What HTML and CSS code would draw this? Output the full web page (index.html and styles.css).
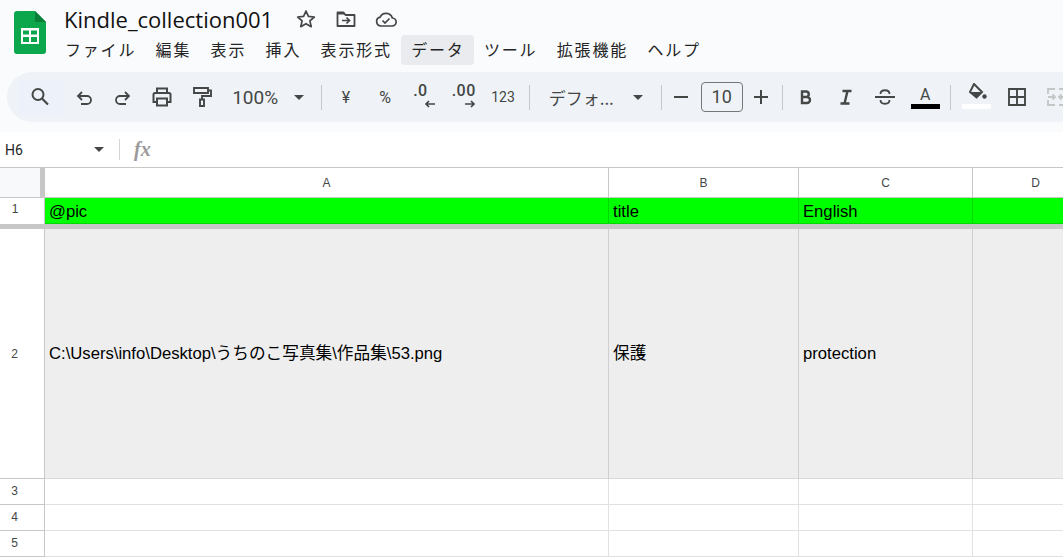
FILE: index.html
```html
<!DOCTYPE html>
<html lang="ja">
<head>
<meta charset="utf-8">
<title>Kindle_collection001</title>
<link rel="stylesheet" href="styles.css">
</head>
<body>
<header class="appbar">
  <svg class="logo" viewBox="0 0 32 43" width="32" height="43"><path d="M3 0H21L32 11V40a3 3 0 0 1-3 3H3a3 3 0 0 1-3-3V3a3 3 0 0 1 3-3z" fill="#0ca74c"/><path d="M21 0L32 11H21z" fill="#0a7f3a"/><path d="M7 17H25V33H7z" fill="#fff"/><path d="M9 19.500H15V23.500H9zM17 19.500H23V23.500H17zM9 26H15V31H9zM17 26H23V31H17z" fill="#0ca74c"/></svg>
  <div class="appbar-main">
    <div class="title-row">
      <span class="doc-title">Kindle_collection001</span>
      <svg class="title-icon" viewBox="0 0 24 24" width="24" height="24"><path d="M12 4l2.400 5.400 5.900.6-4.400 3.900 1.300 5.800L12 16.700l-5.200 3 1.300-5.800L3.700 10l5.900-.6z" fill="none" stroke="#444746" stroke-width="1.700" stroke-linejoin="round"/></svg>
      <svg class="title-icon" viewBox="0 0 24 24" width="24" height="24"><path d="M3.500 5.500h6l2 2.500h9v11h-17z" fill="none" stroke="#444746" stroke-width="1.800" stroke-linejoin="round"/><path d="M3 5h6.500l2 2.500H3z" fill="#444746"/><path d="M8 13.500h7M12.500 10.500l3 3-3 3" fill="none" stroke="#444746" stroke-width="1.700"/></svg>
      <svg class="title-icon" viewBox="0 0 24 24" width="24" height="24"><path d="M7 19a4.500 4.500 0 0 1-.8-8.900A6.500 6.500 0 0 1 18.300 11a4 4 0 0 1-.3 8z" fill="none" stroke="#444746" stroke-width="1.700"/><path d="M8.500 13.500l2.500 2.500 4.500-4.500" fill="none" stroke="#444746" stroke-width="1.700"/></svg>
    </div>
    <nav class="menu">
      <span class="menu-item">ファイル</span>
      <span class="menu-item">編集</span>
      <span class="menu-item">表示</span>
      <span class="menu-item">挿入</span>
      <span class="menu-item">表示形式</span>
      <span class="menu-item active">データ</span>
      <span class="menu-item">ツール</span>
      <span class="menu-item">拡張機能</span>
      <span class="menu-item">ヘルプ</span>
    </nav>
  </div>
</header>

<div class="toolbar-wrap">
  <div class="toolbar">
    <span class="tool search"><svg viewBox="0 0 24 24" width="24" height="24"><circle cx="10" cy="9.500" r="5.500" fill="none" stroke="#444746" stroke-width="2"/><path d="M14 13.500l6 6" stroke="#444746" stroke-width="2.200"/></svg></span>
    <span class="tool"><svg viewBox="0 0 24 24" width="24" height="24"><path d="M10 7l-4 4 4 4M6 11h9a4 4 0 0 1 0 8H9" fill="none" stroke="#444746" stroke-width="1.800"/></svg></span>
    <span class="tool"><svg viewBox="0 0 24 24" width="24" height="24"><path d="M14 7l4 4-4 4M18 11H9a4 4 0 0 0 0 8h6" fill="none" stroke="#444746" stroke-width="1.800"/></svg></span>
    <span class="tool"><svg viewBox="0 0 24 24" width="24" height="24"><path d="M7 8V3.500h10V8M7 17H3.500V9.500a1.500 1.500 0 0 1 1.500-1.500h14a1.500 1.500 0 0 1 1.500 1.500V17H17M7 13.500h10v7H7z" fill="none" stroke="#444746" stroke-width="2"/></svg></span>
    <span class="tool"><svg viewBox="0 0 24 24" width="24" height="24"><path d="M4 3h14v5H4zM18 5.500h3V11H12v3.500M10 14.500h4V21h-4z" fill="none" stroke="#444746" stroke-width="1.900"/></svg></span>
    <span class="tool zoom-box"><span class="tool-text zoom-text">100%</span><span class="caret"></span></span>
    <span class="sep"></span>
    <span class="tool tool-glyph">¥</span>
    <span class="tool tool-glyph">%</span>
    <span class="tool deci"><span class="deci-text deci-one">.0</span><svg class="deci-arrow" viewBox="0 0 12 8" width="12" height="8"><path d="M11 4H2M5 1L2 4l3 3" fill="none" stroke="#444746" stroke-width="1.700"/></svg></span>
    <span class="tool deci"><span class="deci-text">.00</span><svg class="deci-arrow" viewBox="0 0 12 8" width="12" height="8"><path d="M1 4h9M7 1l3 3-3 3" fill="none" stroke="#444746" stroke-width="1.700"/></svg></span>
    <span class="tool num">123</span>
    <span class="sep sep-num"></span>
    <span class="font-box"><span class="font-name">デフォ...</span><span class="caret"></span></span>
    <span class="sep"></span>
    <span class="tool step-minus"><svg viewBox="0 0 16 16" width="16" height="16"><path d="M1 8h14" stroke="#444746" stroke-width="2"/></svg></span>
    <span class="size-box">10</span>
    <span class="tool step-plus"><svg viewBox="0 0 16 16" width="16" height="16"><path d="M1 8h14M8 1v14" stroke="#444746" stroke-width="2"/></svg></span>
    <span class="sep sep-plus"></span>
    <span class="tool"><svg viewBox="0 0 24 24" width="24" height="24"><path d="M8 6.500h4.500a2.800 2.800 0 0 1 0 5.500H8zM8 12h5a3 3 0 0 1 0 6H8z" fill="none" stroke="#444746" stroke-width="2.400"/></svg></span>
    <span class="tool"><svg viewBox="0 0 24 24" width="24" height="24"><path d="M8.500 6h9M6.500 18.500h9M13.500 6l-3 12.500" fill="none" stroke="#444746" stroke-width="2.400"/></svg></span>
    <span class="tool"><svg viewBox="0 0 24 24" width="24" height="24"><path d="M2 12h20" stroke="#444746" stroke-width="1.800"/><path d="M7.500 9c0-5 9-5 9 0M7.500 15c0 5 9 5 9 0" fill="none" stroke="#444746" stroke-width="1.800"/></svg></span>
    <span class="tool swatch-tool text-color"><span class="text-a">A</span><span class="swatch black"></span></span>
    <span class="sep sep-a"></span>
    <span class="tool swatch-tool fill-tool"><svg viewBox="0 0 24 20" width="24" height="20"><path d="M9 1l8 8-5.500 5.500L5 9z" fill="none" stroke="#444746" stroke-width="2"/><path d="M5.500 9h11l-5 5.500z" fill="#444746"/><circle cx="19.500" cy="13.500" r="2.200" fill="#444746"/></svg><span class="swatch white"></span></span>
    <span class="tool border-tool"><svg viewBox="0 0 24 24" width="24" height="24"><path d="M4 4h16v16H4zM12 4v16M4 12h16" fill="none" stroke="#444746" stroke-width="1.900"/></svg></span>
    <span class="tool merge-tool"><svg viewBox="0 0 24 24" width="24" height="24"><path d="M10 4H3v5M3 15v5h7M14 4h7v5M21 15v5h-7M3 12h7M7.500 9.500L10 12l-2.500 2.500M21 12h-7M16.500 9.500L14 12l2.500 2.500" fill="none" stroke="#c4c7c5" stroke-width="1.800"/></svg></span>
  </div>
</div>

<div class="formula-bar">
  <span class="name-box">H6</span>
  <span class="caret name-caret"></span>
  <span class="formula-sep"></span>
  <span class="fx">fx</span>
</div>

<main class="sheet">
  <div class="corner"></div>
  <div class="col-head">A</div>
  <div class="col-head">B</div>
  <div class="col-head">C</div>
  <div class="col-head col-last">D</div>

  <div class="row-head frozen">1</div>
  <div class="cell head-cell">@pic</div>
  <div class="cell head-cell">title</div>
  <div class="cell head-cell">English</div>
  <div class="cell head-cell col-last"></div>

  <div class="row-head tall">2</div>
  <div class="cell gray-cell">C:\Users\info\Desktop\うちのこ写真集\作品集\53.png</div>
  <div class="cell gray-cell">保護</div>
  <div class="cell gray-cell">protection</div>
  <div class="cell gray-cell col-last"></div>

  <div class="row-head">3</div>
  <div class="cell"></div><div class="cell"></div><div class="cell"></div><div class="cell col-last"></div>
  <div class="row-head">4</div>
  <div class="cell"></div><div class="cell"></div><div class="cell"></div><div class="cell col-last"></div>
  <div class="row-head">5</div>
  <div class="cell"></div><div class="cell"></div><div class="cell"></div><div class="cell col-last"></div>
</main>
</body>
</html>
```
FILE: styles.css
```css
* { box-sizing: border-box; }
html, body { margin: 0; height: 100%; overflow: hidden; }
body {
  background: #f9fbfd;
  color: #1f1f1f;
  font-family: "Roboto", "Noto Sans CJK JP", sans-serif;
}
svg { display: block; }

.appbar { display: flex; height: 72px; }
.logo { margin: 11px 0 0 14px; flex: none; }
.appbar-main { margin-left: 9px; display: flex; flex-direction: column; }
.title-row { display: flex; align-items: center; height: 35px; padding: 3px 0 0 9px; }
.doc-title {
  font-family: "Open Sans", "Noto Sans", sans-serif;
  font-size: 22px;
  width: 230px;
  white-space: nowrap;
  color: #111;
}
.title-icon { margin-right: 16px; flex: none; }
.menu { display: flex; height: 30px; }
.menu-item {
  font-family: "Noto Sans CJK JP", sans-serif;
  font-size: 16px;
  letter-spacing: 1.800px;
  padding: 0 9.400px 2px 10px;
  line-height: 28px;
  border-radius: 4px;
  white-space: nowrap;
  color: #242424;
}
.menu-item.active { background: #e9ebee; }

.toolbar-wrap { height: 60px; padding-left: 7px; }
.toolbar {
  height: 50px;
  background: #eff3f8;
  border-radius: 25px 0 0 25px;
  display: flex;
  align-items: center;
  padding-left: 11px;
  overflow: hidden;
  color: #444746;
}
.tool {
  flex: none;
  width: 39.300px;
  height: 35px;
  display: flex;
  align-items: center;
  justify-content: center;
}
.search { width: 46px; background: #edf2fa; padding-right: 3px; }
.tool-text { font-size: 19px; }
.zoom-box { width: 96px; justify-content: flex-start; padding-left: 11px; }
.zoom-text { width: 62px; }
.caret {
  flex: none;
  width: 0;
  height: 0;
  border-left: 5px solid transparent;
  border-right: 5px solid transparent;
  border-top: 5px solid #444746;
}
.sep { flex: none; width: 1px; height: 25px; background: #c7c7c7; margin: 0 4px; }
.tool-glyph { font-size: 16px; }
.deci { flex-direction: column; font-weight: 500; }
.deci-text { font-size: 16px; line-height: 16px; letter-spacing: .5px; margin-top: -3px; }
.deci-one { margin-left: -8px; }
.deci-arrow { margin: 1px 0 0 12px; }
.num { font-size: 14px; }
.sep-num { margin-left: 6px; margin-right: 0; }
.font-box { flex: none; width: 127px; display: flex; align-items: center; padding-left: 19px; }
.font-name {
  font-family: "Noto Sans CJK JP", sans-serif;
  font-size: 17px;
  width: 84px;
  white-space: nowrap;
}
.step-minus { width: 31px; }
.step-plus { width: 36px; }
.size-box {
  flex: none;
  width: 42px;
  height: 30px;
  margin-left: 4px;
  border: 1px solid #747775;
  border-radius: 4px;
  text-align: center;
  font-size: 18px;
  line-height: 28px;
  color: #444746;
}
.sep-plus { margin-left: 3px; }
.swatch-tool { flex-direction: column; }
.text-color { margin-left: 1px; }
.text-a { font-size: 16px; line-height: 16px; margin-top: 1px; }
.swatch { width: 29px; height: 5px; flex: none; margin-top: 1px; }
.black { background: #000; }
.white { background: #fff; }
.fill-tool svg { margin-top: -3px; }
.sep-a { margin: 0 6px 0 5px; }
.border-tool { margin-left: 1px; }
.merge-tool { margin-left: 1px; }

.formula-bar {
  height: 36px;
  background: #fff;
  display: flex;
  align-items: center;
  border-bottom: 1px solid #c7c7c7;
}
.name-box {
  width: 94px;
  padding-left: 5px;
  font-size: 14px;
  color: #1f1f1f;
}
.name-caret { margin-right: 15px; }
.formula-sep { width: 1px; height: 21px; background: #d5d5d5; margin-right: 14px; }
.fx {
  font-family: "Liberation Serif", serif;
  font-style: italic;
  font-weight: 700;
  font-size: 20px;
  color: #9a9a9a;
}

.sheet {
  display: grid;
  grid-template-columns: 45px 564px 190px 174px 125px;
  grid-template-rows: 30px 31px 250px 26px 26px 26px;
  background: #fff;
  font-family: "Liberation Sans", "Noto Sans CJK JP", sans-serif;
}
.corner {
  background: #f8f9fa;
  border-right: 5px solid #c7c7c7;
  border-bottom: 1px solid #c7c7c7;
}
.col-head {
  display: flex;
  align-items: center;
  justify-content: center;
  font-size: 12px;
  color: #444746;
  border-right: 1px solid #c7c7c7;
  border-bottom: 1px solid #c7c7c7;
}
.row-head {
  display: flex;
  justify-content: center;
  align-items: center;
  font-size: 12px;
  color: #444746;
  background: #fff;
  border-right: 1px solid #c7c7c7;
  border-bottom: 1px solid #c7c7c7;
  padding: 0 15px 2px 0;
}
.row-head.tall { padding-bottom: 0; }
.row-head.frozen { border-right: 0; border-bottom: 5px solid #c7c7c7; padding: 0 15px 5px 0; box-shadow: inset -1px 0 0 #c7c7c7; }
.cell {
  display: flex;
  align-items: center;
  padding-left: 4px;
  font-size: 16.670px;
  line-height: 20px;
  color: #000;
  white-space: nowrap;
  border-right: 1px solid #e1e1e1;
  border-bottom: 1px solid #e1e1e1;
}
.head-cell {
  background: #00ff00;
  border-right: 0;
  border-bottom: 5px solid #c7c7c7;
  padding-top: 2px;
  box-shadow: inset -1px -1px 0 #00d900;
}
.gray-cell { background: #eeeeee; border-right-color: #cfcfcf; border-bottom-color: #d8d8d8; }
.col-last { border-right: 0; }
```
